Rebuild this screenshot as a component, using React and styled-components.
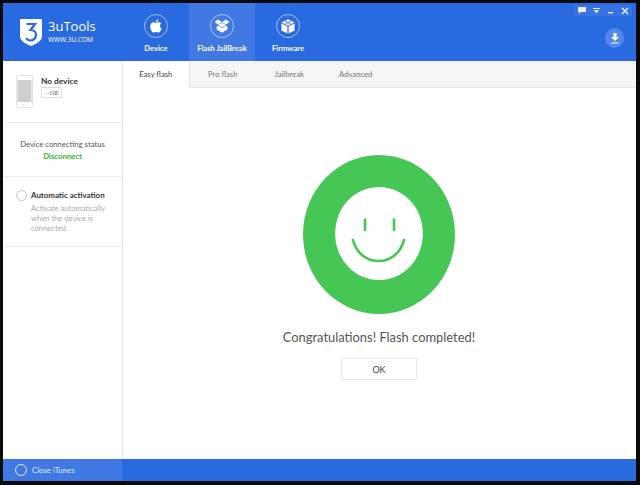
import React from 'react';
import styled, { createGlobalStyle } from 'styled-components';

const Global = createGlobalStyle`
	html, body {
		margin: 0;
		padding: 0;
		width: 640px;
		height: 485px;
		overflow: hidden;
		background: #0a0a0c;
		font-family: 'Lato', 'Noto Sans', sans-serif;
	}
`;

const Screen = styled.div`
	width: 640px;
	height: 485px;
	box-sizing: border-box;
	padding: 3px 4px 4px 3px;
`;

const Win = styled.div`
	height: 100%;
	display: flex;
	flex-direction: column;
	background: #fff;
`;

const Header = styled.header`
	position: relative;
	height: 58px;
	flex: none;
	display: flex;
	background: #2a6ae0;
`;

const Brand = styled.div`
	width: 120px;
	padding: 15px 0 0 16px;
	box-sizing: border-box;
	display: flex;
	gap: 5px;
`;

const BrandText = styled.div`
	color: #fff;
	display: flex;
	flex-direction: column;
`;

const BrandName = styled.div`
	font-family: 'Open Sans', sans-serif;
	font-size: 13px;
	line-height: 16px;
`;

const BrandUrl = styled.div`
	font-family: 'Open Sans', sans-serif;
	font-size: 6.5px;
	line-height: 9px;
	margin-top: 1px;
`;

const Nav = styled.nav`
	display: flex;
`;

const NavItem = styled.div`
	width: 66px;
	display: flex;
	flex-direction: column;
	align-items: center;
	padding-top: 11px;
	box-sizing: border-box;
	background: ${(props) => (props.$active ? '#4079e3' : 'transparent')};
	color: #fff;
	font-size: 7.6px;
	font-weight: 700;
`;

const NavRing = styled.div`
	width: 22px;
	height: 22px;
	border: 1px solid rgba(255, 255, 255, 0.55);
	border-radius: 50%;
	display: flex;
	align-items: center;
	justify-content: center;
`;

const NavLabel = styled.div`
	margin-top: 4px;
	line-height: 12px;
	white-space: nowrap;
`;

const WinButtons = styled.div`
	position: absolute;
	top: 2px;
	right: 4px;
	width: 58px;
	height: 11px;
	display: flex;
	align-items: center;
	justify-content: space-around;
	background: rgba(255, 255, 255, 0.06);
`;

const Download = styled.div`
	position: absolute;
	top: 25px;
	right: 12px;
	width: 19px;
	height: 20px;
	border-radius: 50%;
	background: #5287e8;
	display: flex;
	align-items: center;
	justify-content: center;
`;

const Body = styled.div`
	flex: 1;
	display: flex;
	min-height: 0;
`;

const Side = styled.aside`
	width: 120px;
	flex: none;
	box-sizing: border-box;
	border-right: 1px solid #e3e3e6;
`;

const DeviceCard = styled.div`
	height: 62px;
	box-sizing: border-box;
	padding: 14px 0 0 13px;
	display: flex;
	gap: 8px;
	border-bottom: 1px solid #ececee;
`;

const DeviceInfo = styled.div`
	display: flex;
	flex-direction: column;
	align-items: flex-start;
`;

const DeviceName = styled.div`
	font-size: 8.3px;
	font-weight: 700;
	line-height: 12px;
	color: #333;
`;

const Badge = styled.div`
	height: 9px;
	width: 19px;
	border: 1px solid #ddd;
	border-radius: 1px;
	color: #777;
	font-size: 6.5px;
	line-height: 9px;
	text-align: center;
`;

const Status = styled.div`
	height: 54px;
	box-sizing: border-box;
	padding-top: 15px;
	text-align: center;
	font-size: 7.7px;
	line-height: 12px;
	color: #555;
	border-bottom: 1px solid #ececee;
`;

const Disconnect = styled.div`
	color: #2cb52c;
	font-weight: 700;
`;

const Activation = styled.div`
	height: 70px;
	box-sizing: border-box;
	padding: 12px 0 0 13px;
	border-bottom: 1px solid #ececee;
	display: flex;
	gap: 4px;
`;

const Radio = styled.div`
	flex: none;
	width: 9px;
	height: 9px;
	margin-top: 1px;
	border: 1px solid #c4c4c8;
	border-radius: 50%;
`;

const ActivationTitle = styled.div`
	font-size: 7.9px;
	font-weight: 700;
	color: #333;
	line-height: 12px;
	white-space: nowrap;
`;

const ActivationText = styled.div`
	margin-top: 2px;
	font-size: 7.6px;
	line-height: 10px;
	color: #aaa;
	white-space: nowrap;
`;

const Main = styled.main`
	flex: 1;
	display: flex;
	flex-direction: column;
	min-width: 0;
`;

const Tabs = styled.div`
	height: 27px;
	flex: none;
	display: flex;
	background: #f5f5f5;
	border-bottom: 1px solid #e6e6e8;
	box-sizing: border-box;
`;

const Tab = styled.div`
	width: 66.5px;
	height: ${(props) => (props.$active ? '27px' : '26px')};
	padding-bottom: 1px;
	display: flex;
	align-items: center;
	justify-content: center;
	font-size: 7.7px;
	color: ${(props) => (props.$active ? '#444' : '#777')};
	background: ${(props) => (props.$active ? '#fff' : 'transparent')};
	border-right: ${(props) => (props.$active ? '1px solid #e6e6e8' : 'none')};
	box-sizing: border-box;
`;

const Result = styled.div`
	flex: 1;
	display: flex;
	flex-direction: column;
	align-items: center;
	padding: 67px 1px 0 0;
`;

const Message = styled.div`
	margin-top: 14px;
	font-size: 12.9px;
	line-height: 19px;
	color: #555;
`;

const OkButton = styled.button`
	margin-top: 11px;
	width: 76px;
	height: 22px;
	padding: 0;
	background: #fff;
	border: 1px solid #e8e8ea;
	font-family: inherit;
	font-size: 9px;
	color: #444;
`;

const Footer = styled.footer`
	height: 22px;
	flex: none;
	display: flex;
	background: #2a6ae0;
`;

const FooterLeft = styled.div`
	width: 119px;
	box-sizing: border-box;
	padding-left: 12px;
	display: flex;
	align-items: center;
	gap: 5px;
	background: #4079e3;
	color: #dfe9fb;
	font-size: 7.8px;
`;

const FooterRing = styled.div`
	width: 10px;
	height: 10px;
	border: 1px solid #dfe9fb;
	border-radius: 50%;
`;

function Logo() {
	return (
		<svg width="24" height="29" viewBox="0 0 24 29">
			<path d="M1 1 H23 V18 C23 23 17 26 12 28 C7 26 1 23 1 18 Z" fill="#fff" />
			<path
				d="M7.500 6 H16 L11.500 12 C15 12 17 14 17 17 C17 20 14.500 22.500 11.500 22.500 C9.500 22.500 8 21.500 7 20"
				fill="none"
				stroke="#2a6ae0"
				strokeWidth="2.2"
			/>
		</svg>
	);
}

function AppleIcon() {
	return (
		<svg width="12" height="14" viewBox="0 0 12 14" fill="#fff">
			<path d="M8.3 0.2 C8.4 1.8 7.2 3.1 5.8 3 C5.7 1.6 7 0.3 8.3 0.2 Z" />
			<path d="M6 3.8 C7 3.8 7.6 3.2 8.7 3.2 C9.7 3.2 10.7 3.7 11.3 4.6 C9.3 5.8 9.6 8.6 11.7 9.5 C11.1 11.2 9.8 13.6 8.4 13.6 C7.5 13.6 7 13 6 13 C5 13 4.5 13.6 3.6 13.6 C2 13.6 0.2 10.2 0.2 7.5 C0.2 4.8 1.9 3.3 3.5 3.3 C4.5 3.3 5.3 3.8 6 3.8 Z" />
		</svg>
	);
}

function DropboxIcon() {
	return (
		<svg width="16" height="14" viewBox="0 0 16 14" fill="#fff">
			<path d="M4 0.5 L8 3 L4 5.5 L0.5 3 Z" />
			<path d="M12 0.5 L15.5 3 L12 5.5 L8 3 Z" />
			<path d="M4 6 L8 3.8 L12 6 L8 8.4 Z" />
			<path d="M2.6 7.5 L4 6.6 L8 9.2 L12 6.6 L13.4 7.5 V10.6 L8 13.8 L2.6 10.6 Z" />
		</svg>
	);
}

function BoxIcon() {
	return (
		<svg width="14" height="15" viewBox="0 0 14 15" fill="#fff">
			<path d="M7 0.3 L13.6 3.4 L7 6.4 L0.4 3.4 Z" />
			<path d="M0.4 4.6 L6.4 7.3 V14.6 L0.4 11.6 Z" />
			<path d="M13.6 4.6 L7.6 7.3 V14.6 L13.6 11.6 Z" />
			<path d="M4 2 L10 5 M10 2 L4 5" stroke="#2a6ae0" strokeWidth="0.8" />
		</svg>
	);
}

function Phone() {
	return (
		<svg width="17" height="33" viewBox="0 0 17 33">
			<rect x="0.5" y="0.5" width="16" height="32" rx="2" fill="#fff" stroke="#e2e2e2" />
			<rect x="1.5" y="5" width="14" height="22" fill="#cfcfcf" />
			<circle cx="8.5" cy="30" r="1.2" fill="none" stroke="#ddd" strokeWidth="0.6" />
		</svg>
	);
}

function Smiley() {
	return (
		<svg width="152" height="159" viewBox="0 0 152 159">
			<ellipse cx="76" cy="79.500" rx="76" ry="79.500" fill="#45c655" />
			<ellipse cx="76" cy="78.500" rx="44" ry="46.500" fill="#fff" />
			<path
				d="M62 64.500 V75 M91 64.500 V75"
				stroke="#45c655"
				strokeWidth="2.600"
				strokeLinecap="round"
			/>
			<path
				d="M50 85 C57 113 94 113 101 85"
				fill="none"
				stroke="#45c655"
				strokeWidth="2.700"
				strokeLinecap="round"
			/>
		</svg>
	);
}

const tabs = ['Easy flash', 'Pro flash', 'Jailbreak', 'Advanced'];

export default function App() {
	return (
		<Screen>
			<Global />
			<Win>
				<Header>
					<Brand>
						<Logo />
						<BrandText>
							<BrandName>3uTools</BrandName>
							<BrandUrl>WWW.3U.COM</BrandUrl>
						</BrandText>
					</Brand>
					<Nav>
						<NavItem>
							<NavRing><AppleIcon /></NavRing>
							<NavLabel>Device</NavLabel>
						</NavItem>
						<NavItem $active>
							<NavRing><DropboxIcon /></NavRing>
							<NavLabel>Flash JailBreak</NavLabel>
						</NavItem>
						<NavItem>
							<NavRing><BoxIcon /></NavRing>
							<NavLabel>Firmware</NavLabel>
						</NavItem>
					</Nav>
					<WinButtons>
						<svg width="8" height="7" viewBox="0 0 8 7" fill="#e6eefc">
							<path d="M0 0 H8 V5 H3 L1 7 V5 H0 Z" />
						</svg>
						<svg width="7" height="6" viewBox="0 0 7 6" fill="#e6eefc">
							<path d="M0 0 H7 V1 H0 Z M1 2 H6 L3.500 5.500 Z" />
						</svg>
						<svg width="7" height="6" viewBox="0 0 7 6" fill="#e6eefc">
							<rect x="1" y="4" width="5" height="1.400" />
						</svg>
						<svg width="8" height="8" viewBox="0 0 8 8">
							<path d="M1 1 L7 7 M7 1 L1 7" stroke="#e6eefc" strokeWidth="1.500" />
						</svg>
					</WinButtons>
					<Download>
						<svg width="8" height="11" viewBox="0 0 8 11" fill="#fff">
							<path d="M2.500 0 H5.500 V4 H8 L4 8 L0 4 H2.500 Z" />
							<rect x="0.500" y="9.500" width="7" height="1" />
						</svg>
					</Download>
				</Header>
				<Body>
					<Side>
						<DeviceCard>
							<Phone />
							<DeviceInfo>
								<DeviceName>No device</DeviceName>
								<Badge>--GB</Badge>
							</DeviceInfo>
						</DeviceCard>
						<Status>
							Device connecting status
							<Disconnect>Disconnect</Disconnect>
						</Status>
						<Activation>
							<Radio />
							<div>
								<ActivationTitle>Automatic activation</ActivationTitle>
								<ActivationText>
									Activate automatically
									<br />
									when the device is
									<br />
									connected
								</ActivationText>
							</div>
						</Activation>
					</Side>
					<Main>
						<Tabs>
							{tabs.map((t, i) => (
								<Tab key={t} $active={i === 0}>{t}</Tab>
							))}
						</Tabs>
						<Result>
							<Smiley />
							<Message>Congratulations! Flash completed!</Message>
							<OkButton>OK</OkButton>
						</Result>
					</Main>
				</Body>
				<Footer>
					<FooterLeft>
						<FooterRing />
						Close iTunes
					</FooterLeft>
				</Footer>
			</Win>
		</Screen>
	);
}
